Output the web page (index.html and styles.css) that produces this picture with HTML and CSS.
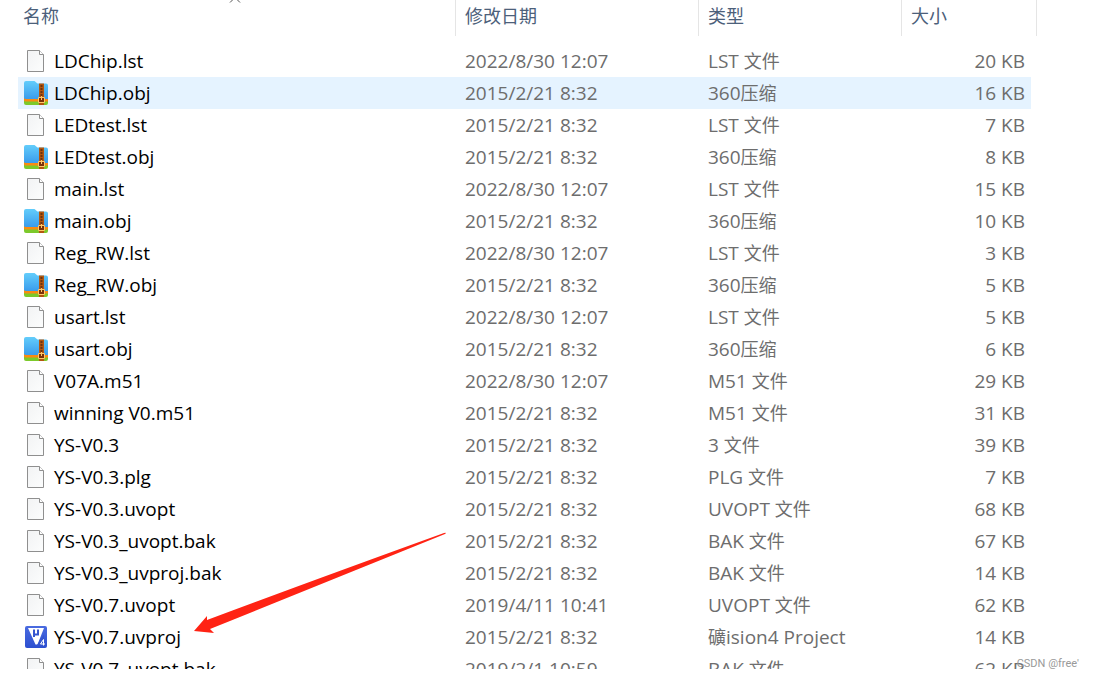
FILE: index.html
```html
<!DOCTYPE html>
<html lang="zh-CN">
<head>
    <meta charset="UTF-8">
    <meta name="viewport" content="width=device-width, initial-scale=1.0">
    <title>文件列表</title>
    <link rel="stylesheet" href="styles.css">
</head>
<body>
    <svg class="symbols" aria-hidden="true">
        <defs>
            <linearGradient id="sky" x1="0" y1="0" x2="0" y2="1">
                <stop offset="0" stop-color="#63cdfb"/>
                <stop offset="1" stop-color="#3a9cec"/>
            </linearGradient>
            <linearGradient id="paper" x1="0" y1="0" x2="1" y2="1">
                <stop offset="0" stop-color="#f2f3f4"/>
                <stop offset="1" stop-color="#fcfdfd"/>
            </linearGradient>
            <linearGradient id="keil" x1="0" y1="0" x2="0" y2="1">
                <stop offset="0" stop-color="#4a6be0"/>
                <stop offset="1" stop-color="#2c4fd0"/>
            </linearGradient>
        </defs>
        <symbol id="page" viewBox="0 0 24 24">
            <path d="M3.500 1.500h12l4 4v17h-16z" fill="url(#paper)" stroke="#8f8f8f"/>
            <path d="M15.500 1.500v4h4" fill="#fff" stroke="#8f8f8f"/>
        </symbol>
        <symbol id="zip" viewBox="0 0 24 24">
            <path d="M0 19h24v3a2 2 0 0 1-2 2H2a2 2 0 0 1-2-2z" fill="#7cc92b"/>
            <path d="M0 17h24v3.500H2a2 2 0 0 1-2-1z" fill="#f98b12"/>
            <path d="M0 2a2 2 0 0 1 2-2h8.500l3 2.500H22a2 2 0 0 1 2 2V18H2a2 2 0 0 1-2-1z" fill="url(#sky)"/>
            <path d="M15 2.500h5V24h-5z" fill="#b4560f"/>
            <path d="M17.500 4v11" stroke="#6b3410" stroke-width="2" stroke-dasharray="2 1"/>
            <path d="M14.500 16.500h6v5h-6z" fill="#7a3208" stroke="#ffc869"/>
            <path d="M17.500 15v4" stroke="#ffc869"/>
        </symbol>
        <symbol id="uv4" viewBox="0 0 24 24">
            <rect x="1" y="1" width="22" height="22" rx="2" fill="url(#keil)"/>
            <path d="M4 3h16l-6.500 16.500h-2z" fill="#fff"/>
            <path d="M10 4.500v7.500M10 9.500h4M14 4.500v6" fill="none" stroke="#3555cf" stroke-width="2"/>
            <path d="M18.500 20.500v-6l-3 4.500h5" fill="none" stroke="#3555cf" stroke-width="3"/>
            <path d="M19.500 20.500v-6l-3 4.500h4.500" fill="none" stroke="#fff"/>
        </symbol>
    </svg>

    <main class="list">
        <table class="files">
            <colgroup>
                <col>
                <col class="col-date">
                <col class="col-type">
                <col class="col-size">
                <col class="col-end">
            </colgroup>
            <thead>
                <tr>
                    <th class="sorted">名称<svg class="sort" viewBox="0 0 12 6"><path d="M1 5.500l5-5 5 5" fill="none" stroke="#555"/></svg></th>
                    <th>修改日期</th>
                    <th>类型</th>
                    <th>大小</th>
                    <th></th>
                </tr>
            </thead>
            <tbody>
                <tr><td><svg class="icon"><use href="#page"/></svg>LDChip.lst</td><td>2022/8/30 12:07</td><td>LST <span>文件</span></td><td>20 KB</td></tr>
                <tr class="hover"><td><svg class="icon"><use href="#zip"/></svg>LDChip.obj</td><td>2015/2/21 8:32</td><td>360<span>压缩</span></td><td>16 KB</td></tr>
                <tr><td><svg class="icon"><use href="#page"/></svg>LEDtest.lst</td><td>2015/2/21 8:32</td><td>LST <span>文件</span></td><td>7 KB</td></tr>
                <tr><td><svg class="icon"><use href="#zip"/></svg>LEDtest.obj</td><td>2015/2/21 8:32</td><td>360<span>压缩</span></td><td>8 KB</td></tr>
                <tr><td><svg class="icon"><use href="#page"/></svg>main.lst</td><td>2022/8/30 12:07</td><td>LST <span>文件</span></td><td>15 KB</td></tr>
                <tr><td><svg class="icon"><use href="#zip"/></svg>main.obj</td><td>2015/2/21 8:32</td><td>360<span>压缩</span></td><td>10 KB</td></tr>
                <tr><td><svg class="icon"><use href="#page"/></svg>Reg_RW.lst</td><td>2022/8/30 12:07</td><td>LST <span>文件</span></td><td>3 KB</td></tr>
                <tr><td><svg class="icon"><use href="#zip"/></svg>Reg_RW.obj</td><td>2015/2/21 8:32</td><td>360<span>压缩</span></td><td>5 KB</td></tr>
                <tr><td><svg class="icon"><use href="#page"/></svg>usart.lst</td><td>2022/8/30 12:07</td><td>LST <span>文件</span></td><td>5 KB</td></tr>
                <tr><td><svg class="icon"><use href="#zip"/></svg>usart.obj</td><td>2015/2/21 8:32</td><td>360<span>压缩</span></td><td>6 KB</td></tr>
                <tr><td><svg class="icon"><use href="#page"/></svg>V07A.m51</td><td>2022/8/30 12:07</td><td>M51 <span>文件</span></td><td>29 KB</td></tr>
                <tr><td><svg class="icon"><use href="#page"/></svg>winning V0.m51</td><td>2015/2/21 8:32</td><td>M51 <span>文件</span></td><td>31 KB</td></tr>
                <tr><td><svg class="icon"><use href="#page"/></svg>YS-V0.3</td><td>2015/2/21 8:32</td><td>3 <span>文件</span></td><td>39 KB</td></tr>
                <tr><td><svg class="icon"><use href="#page"/></svg>YS-V0.3.plg</td><td>2015/2/21 8:32</td><td>PLG <span>文件</span></td><td>7 KB</td></tr>
                <tr><td><svg class="icon"><use href="#page"/></svg>YS-V0.3.uvopt</td><td>2015/2/21 8:32</td><td>UVOPT <span>文件</span></td><td>68 KB</td></tr>
                <tr><td><svg class="icon"><use href="#page"/></svg>YS-V0.3_uvopt.bak</td><td>2015/2/21 8:32</td><td>BAK <span>文件</span></td><td>67 KB</td></tr>
                <tr><td><svg class="icon"><use href="#page"/></svg>YS-V0.3_uvproj.bak</td><td>2015/2/21 8:32</td><td>BAK <span>文件</span></td><td>14 KB</td></tr>
                <tr><td><svg class="icon"><use href="#page"/></svg>YS-V0.7.uvopt</td><td>2019/4/11 10:41</td><td>UVOPT <span>文件</span></td><td>62 KB</td></tr>
                <tr><td><svg class="icon"><use href="#uv4"/></svg>YS-V0.7.uvproj</td><td>2015/2/21 8:32</td><td><span>礦</span>ision4 Project</td><td>14 KB</td></tr>
                <tr><td><svg class="icon"><use href="#page"/></svg>YS-V0.7_uvopt.bak</td><td>2019/2/1 10:59</td><td>BAK <span>文件</span></td><td>62 KB</td></tr>
            </tbody>
        </table>
    </main>

    <svg class="arrow" viewBox="0 0 252 102" aria-hidden="true">
        <path d="M0 99L13 84L13 88Q120 48 250 1Q253 0 251 2Q130 51 16 97L20 101Z" fill="#ff2314"/>
    </svg>
    <div class="watermark">CSDN @free'</div>
</body>
</html>
```
FILE: styles.css
```css
body {
    position: relative;
    margin: 0;
    height: 100vh;
    overflow: hidden;
    background-color: #fff;
    font-family: "Open Sans", "Noto Sans CJK SC", sans-serif;
}

.symbols {
    position: absolute;
    width: 0;
    height: 0;
}

/* the last row is cut off by the bottom of the list */
.list {
    height: calc(100vh - 9px);
    overflow: hidden;
}

.files {
    width: calc(100% - 75px);
    margin-left: 18px;
    table-layout: fixed;
    border-collapse: separate;
    border-spacing: 0;
    font-size: 19px;
    line-height: 32px;
    white-space: nowrap;
}

.col-date {
    width: 243px;
}

.col-type {
    width: 203px;
}

.col-size {
    width: 130px;
}

.col-end {
    width: 6px;
}

th {
    padding: 0 0 4px 9px;
    border-left: 1px solid #e5e5e5;
    font-size: 18px;
    font-weight: normal;
    text-align: left;
    color: #4c607a;
}

th:first-child {
    padding-left: 5px;
    border-left: none;
}

th:nth-child(5) {
    padding: 0;
    border-left: none;
    border-right: 1px solid #e5e5e5;
}

.sorted {
    position: relative;
}

.sort {
    position: absolute;
    top: -3px;
    left: 50%;
    width: 12px;
    height: 6px;
    margin-left: -8px;
}

tbody::before {
    content: "";
    display: block;
    height: 9px;
}

td {
    height: 32px;
    padding: 0 0 0 10px;
    color: #6d6d6d;
}

td span {
    font-size: 18px;
    line-height: 1;
}

td:first-child {
    padding-left: 6px;
    color: #000;
}

td:nth-child(4) {
    padding-right: 6px;
    text-align: right;
}

.hover td {
    background-color: #e5f3ff;
}

.icon {
    width: 24px;
    height: 24px;
    margin: 4px 6px 4px 0;
    vertical-align: top;
}

.arrow {
    position: absolute;
    top: 532px;
    left: 194px;
    width: 252px;
    height: 102px;
}

.watermark {
    position: absolute;
    right: 15px;
    bottom: 6px;
    font-family: Roboto, sans-serif;
    font-size: 11px;
    line-height: 16px;
    color: #999;
}
```
